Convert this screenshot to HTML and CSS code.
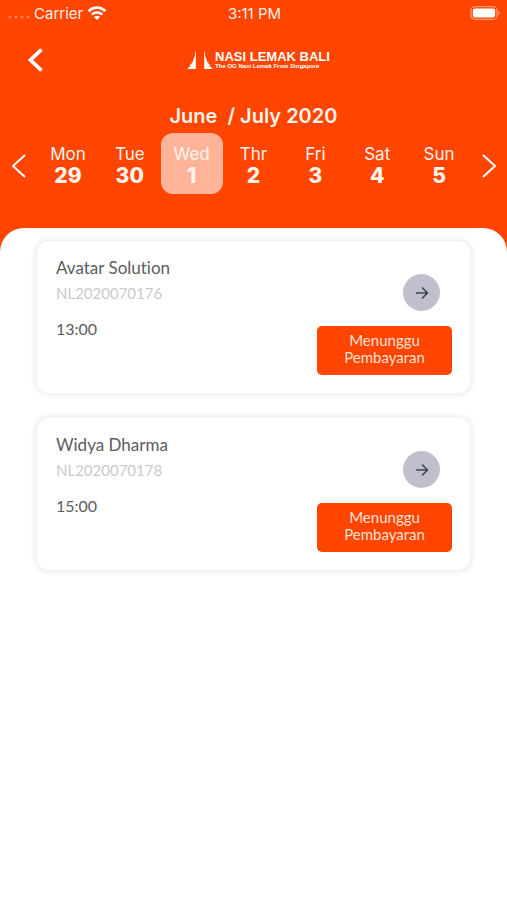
FILE: index.html
```html
<!DOCTYPE html>
<html lang="id">
<head>
<meta charset="utf-8">
<meta name="viewport" content="width=device-width, initial-scale=1">
<title>Nasi Lemak Bali</title>
<link rel="stylesheet" href="styles.css">
</head>
<body>
<header class="header">
  <div class="status">
    <div class="carrier">
      <svg class="dots" width="22" height="4" viewBox="0 0 22 4"><circle cx="2" cy="2" r="1.6"/><circle cx="8" cy="2" r="1.6"/><circle cx="14" cy="2" r="1.6"/><circle cx="20" cy="2" r="1.6"/></svg>
      <span>Carrier</span>
      <svg width="20" height="16" viewBox="0 0 20 16" fill="none" stroke="#fff" stroke-width="2.7"><path d="M1.600 6.200C6.300 1.400 13.700 1.400 18.400 6.200M4.700 9.600c3-3 7.600-3 10.600 0"/><path d="M10 15 6.900 11.900c1.800-1.600 4.400-1.600 6.200 0z" fill="#fff" stroke="none"/></svg>
    </div>
    <span>3:11 PM</span>
    <svg class="battery" width="31" height="14" viewBox="0 0 31 14"><rect x="1" y=".7" width="26" height="12.600" rx="3.800" fill="none" stroke="#fff" stroke-opacity=".45" stroke-width="1.200"/><rect x="2.800" y="2.500" width="22.400" height="9" rx="2.200" fill="#fff"/><path d="M28.300 4.800c1.900.8 1.900 3.600 0 4.400z" fill="#fff" fill-opacity=".5"/></svg>
  </div>
  <div class="brandbar">
    <button class="back" aria-label="Back"><svg width="16" height="24" viewBox="0 0 16 24" fill="none" stroke="#fff" stroke-width="3.800"><path d="M13.500 1.500 2.500 12l11 10.500"/></svg></button>
    <div class="brand">
      <svg width="26" height="20" viewBox="0 0 26 20" fill="#fff"><path d="M8.800.5V19H.5l1.500-2 1.300-.8-.3-1.700 1.700-.5-.2-1.700 1.600-.6-.3-1.900 1.300-.6-.2-2 1-.6-.1-2.500zM17.200.5V19h8.300L24 17l-1.300-.8.3-1.700-1.700-.5.2-1.700-1.600-.6.3-1.900-1.300-.6.2-2-1-.6.1-2.500z"/></svg>
      <div>
        <div class="name">NASI LEMAK BALI</div>
        <div class="tagline">The OG Nasi Lemak From Singapore</div>
      </div>
    </div>
  </div>
  <h1 class="month">June&nbsp; / July 2020</h1>
  <nav class="week">
    <button class="arrow" aria-label="Previous week"><svg width="16" height="24" viewBox="0 0 16 24"><path d="M14 1 2 12l12 11"/></svg></button>
    <div class="days">
      <button class="day">Mon<b>29</b></button>
      <button class="day">Tue<b>30</b></button>
      <button class="day selected">Wed<b>1</b></button>
      <button class="day">Thr<b>2</b></button>
      <button class="day">Fri<b>3</b></button>
      <button class="day">Sat<b>4</b></button>
      <button class="day">Sun<b>5</b></button>
    </div>
    <button class="arrow" aria-label="Next week"><svg width="16" height="24" viewBox="0 0 16 24"><path d="m2 1 12 11L2 23"/></svg></button>
  </nav>
</header>
<main class="sheet">
  <article class="card">
    <div class="info">
      <h2 class="customer">Avatar Solution</h2>
      <p class="code">NL2020070176</p>
      <p class="time">13:00</p>
    </div>
    <div class="actions">
      <button class="open" aria-label="Open order"><svg width="14" height="14" viewBox="0 0 14 14"><path d="M1 7h11M7 1.500 12.500 7 7 12.500"/></svg></button>
      <button class="state">Menunggu Pembayaran</button>
    </div>
  </article>
  <article class="card">
    <div class="info">
      <h2 class="customer">Widya Dharma</h2>
      <p class="code">NL2020070178</p>
      <p class="time">15:00</p>
    </div>
    <div class="actions">
      <button class="open" aria-label="Open order"><svg width="14" height="14" viewBox="0 0 14 14"><path d="M1 7h11M7 1.500 12.500 7 7 12.500"/></svg></button>
      <button class="state">Menunggu Pembayaran</button>
    </div>
  </article>
</main>
</body>
</html>
```
FILE: styles.css
```css
* { box-sizing: border-box; }
body {
  margin: 0;
  min-height: 100vh;
  background: #fff;
  font-family: Inter, "Liberation Sans", sans-serif;
}
h1, h2, p { margin: 0; font-weight: 400; }
button {
  border: 0;
  padding: 0;
  background: none;
  color: inherit;
  font: inherit;
  cursor: pointer;
}
svg { display: block; }

.header {
  background: #ff4500;
  color: #fff;
  padding-bottom: 58px;
}
.status {
  display: grid;
  grid-template-columns: 1fr auto 1fr;
  align-items: center;
  height: 26px;
  padding: 0 6px 0 8px;
  font-size: 15px;
  color: #ffede6;
}
.carrier { display: flex; align-items: center; gap: 4px; }
.dots { fill: #fff; opacity: 0.3; margin-top: 8px; }
.battery { justify-self: end; }

.brandbar {
  display: grid;
  grid-template-columns: 1fr auto 1fr;
  align-items: center;
  height: 68px;
  padding: 0 28px;
}
.back { justify-self: start; }
.brand {
  display: flex;
  align-items: center;
  gap: 2px;
  padding-left: 10px;
  font-family: "Liberation Sans", Arial, sans-serif;
  font-weight: 700;
  white-space: nowrap;
}
.name { font-size: 13px; line-height: 13px; }
.tagline { font-size: 6px; line-height: 7px; }

.month {
  padding-top: 10px;
  text-align: center;
  font-size: 20px;
  line-height: 24px;
  font-weight: 600;
  color: #fff3ee;
}
.week {
  display: flex;
  align-items: center;
  padding-top: 5px;
}
.arrow {
  display: flex;
  justify-content: center;
  width: 37px;
  padding-top: 4px;
}
.arrow svg { fill: none; stroke: #fff; stroke-width: 2; }
.days {
  flex: 1;
  display: grid;
  grid-template-columns: repeat(7, 1fr);
}
.day {
  height: 61px;
  padding-top: 2px;
  border-radius: 12px;
  font-size: 17px;
  line-height: 22px;
  color: #fff3ee;
}
.day b { display: block; font-size: 21px; font-weight: 800; }
.selected { background: #ffb399; }

.sheet {
  display: grid;
  gap: 25px;
  margin-top: -24px;
  padding: 13px 37px;
  border-radius: 24px 24px 0 0;
  background: #fff;
}
.card {
  display: flex;
  justify-content: space-between;
  min-height: 152px;
  padding: 16px 18px;
  border-radius: 12px;
  background: #fff;
  box-shadow: 0 0 4px 3px rgba(40, 40, 60, 0.07);
  font-family: Lato, "Noto Sans", sans-serif;
  font-variant-ligatures: none;
}
.info { padding-left: 1px; }
.customer { font-size: 17px; line-height: 22px; color: #5c5c60; }
.code { padding-top: 3px; font-size: 15px; line-height: 22px; color: #c9cacf; }
.time { padding-top: 14px; font-size: 16px; line-height: 22px; color: #5c5c60; }
.actions {
  display: flex;
  flex-direction: column;
  align-items: flex-end;
  gap: 15px;
  padding-top: 17px;
}
.open {
  display: grid;
  place-items: center;
  width: 37px;
  height: 37px;
  margin-right: 12px;
  border-radius: 50%;
  background: #bfc0cc;
}
.open svg { fill: none; stroke: #41434f; stroke-width: 1.5; }
.state {
  width: 135px;
  height: 49px;
  padding: 0 20px 3px;
  border-radius: 5px;
  background: #ff4500;
  color: #ffe0d4;
  font-size: 15px;
  line-height: 17px;
}
```
